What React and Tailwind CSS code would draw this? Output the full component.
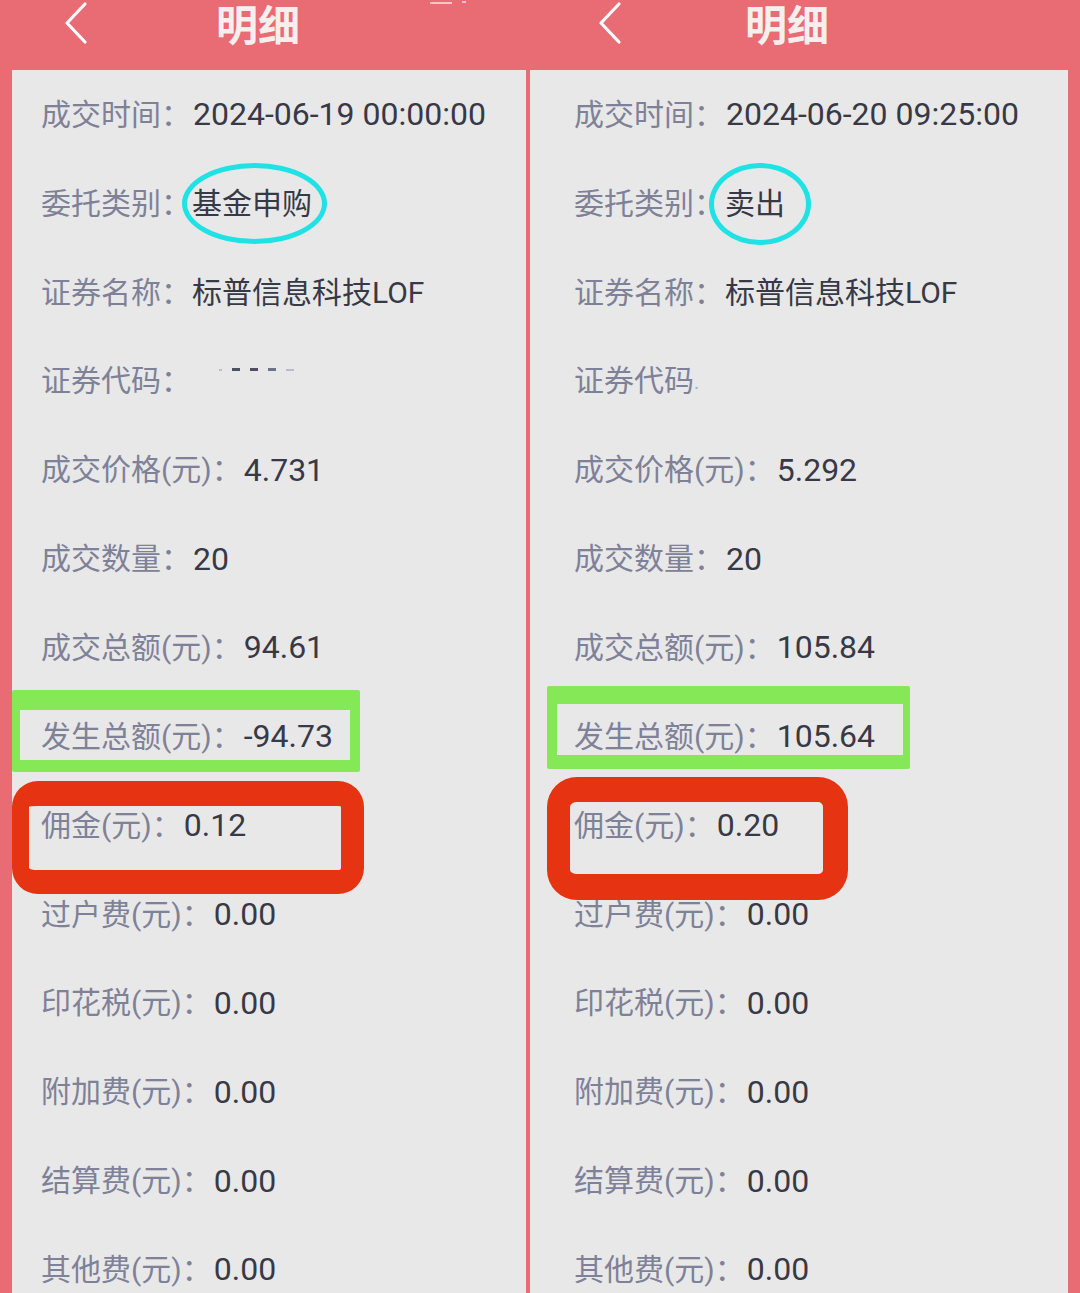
import React from "react";

const leftRows = [
  ["成交时间", "2024-06-19 00:00:00"],
  ["委托类别", "基金申购"],
  ["证券名称", "标普信息科技LOF"],
  ["证券代码", "__mask__"],
  ["成交价格(元)", "4.731"],
  ["成交数量", "20"],
  ["成交总额(元)", "94.61"],
  ["发生总额(元)", "-94.73"],
  ["佣金(元)", "0.12"],
  ["过户费(元)", "0.00"],
  ["印花税(元)", "0.00"],
  ["附加费(元)", "0.00"],
  ["结算费(元)", "0.00"],
  ["其他费(元)", "0.00"],
];

const rightRows = [
  ["成交时间", "2024-06-20 09:25:00"],
  ["委托类别", "卖出"],
  ["证券名称", "标普信息科技LOF"],
  ["证券代码", "__dot__"],
  ["成交价格(元)", "5.292"],
  ["成交数量", "20"],
  ["成交总额(元)", "105.84"],
  ["发生总额(元)", "105.64"],
  ["佣金(元)", "0.20"],
  ["过户费(元)", "0.00"],
  ["印花税(元)", "0.00"],
  ["附加费(元)", "0.00"],
  ["结算费(元)", "0.00"],
  ["其他费(元)", "0.00"],
];

function Mask() {
  return (
    <span className="flex items-center gap-[10px] ml-[28px] -translate-y-[11px]">
      <span className="w-[3px] h-[2px] bg-[#b9bccb]" />
      <span className="w-[8px] h-[3px] bg-[#4d4f62]" />
      <span className="w-[8px] h-[3px] bg-[#4d4f62]" />
      <span className="w-[8px] h-[3px] bg-[#6f7286]" />
      <span className="w-[8px] h-[2px] bg-[#b9bccb]" />
    </span>
  );
}

function Row({ label, value }) {
  if (value === "__dot__") {
    return (
      <div className="flex items-center h-[88.85px] shrink-0 whitespace-nowrap">
        <span className="text-[30px] text-[#7e8197]">{label}</span>
        <span className="text-[20px] text-[#b0b3c2] self-end mb-[28px]">.</span>
      </div>
    );
  }
  const cjk = /[\u4e00-\u9fff]/.test(value);
  return (
    <div className="flex items-center h-[88.85px] shrink-0 whitespace-nowrap">
      <span className="text-[30px] text-[#7e8197]">{label}：</span>
      {value === "__mask__" ? (
        <Mask />
      ) : cjk ? (
        <span className="text-[30px] text-[#383946] ml-[1px]">{value}</span>
      ) : (
        <span className="text-[32px] text-[#383946] ml-[2px]">{value}</span>
      )}
    </div>
  );
}

function Chevron() {
  return (
    <svg width="24" height="44" viewBox="0 0 24 44" className="mt-[1px] shrink-0">
      <polyline points="21,3 3,22 21,41" fill="none" stroke="#ffffff" strokeWidth="3.2" strokeLinecap="round" strokeLinejoin="round" />
    </svg>
  );
}

export default function App() {
  return (
    <div className="w-[1080px] h-[1293px] overflow-hidden bg-[#e96b74] flex font-[Roboto,'Noto_Sans_CJK_SC',sans-serif]">
      {/* Left column */}
      <div className="w-[526px] h-[1293px] flex flex-col shrink-0">
        <div className="h-[70px] shrink-0 relative flex items-start pl-[64px]">
          <Chevron />
          <span className="ml-[128px] mt-[2px] text-[42px] leading-[42px] font-bold text-[#f7eeee] font-['Noto_Sans_CJK_SC',sans-serif]">明细</span>
          <span className="absolute left-[430px] top-[2px] w-[22px] h-[2px] bg-white opacity-60" />
          <span className="absolute left-[462px] top-[1px] w-[4px] h-[2px] bg-white opacity-60" />
        </div>
        <div className="ml-[12px] flex-1 min-h-0 overflow-hidden bg-[#e8e8e8] relative pl-[29px] flex flex-col">
          {leftRows.map(([l, v]) => (
            <Row key={l} label={l} value={v} />
          ))}
          {/* annotations */}
          <div className="absolute left-[170px] top-[93px] w-[145px] h-[81px] rounded-[50%] border-[5px] border-[#1fe2e4]" />
          <div className="absolute left-0 top-[620px] w-[348px] h-[82px] border-t-[20px] border-b-[12px] border-l-[8px] border-r-[10px] border-[#84e857] rounded-[2px]" />
          <div className="absolute left-0 top-[711px] w-[352px] h-[113px] border-t-[25px] border-b-[24px] border-l-[17px] border-r-[23px] border-[#e63412] rounded-[26px]" />
        </div>
      </div>
      {/* divider */}
      <div className="w-[4px] shrink-0" />
      {/* Right column */}
      <div className="w-[550px] h-[1293px] flex flex-col shrink-0">
        <div className="h-[70px] shrink-0 flex items-start pl-[68px]">
          <Chevron />
          <span className="ml-[123px] mt-[2px] text-[42px] leading-[42px] font-bold text-[#f7eeee] font-['Noto_Sans_CJK_SC',sans-serif]">明细</span>
        </div>
        <div className="w-[538px] flex-1 min-h-0 overflow-hidden bg-[#e8e8e8] relative pl-[44px] flex flex-col">
          {rightRows.map(([l, v]) => (
            <Row key={l} label={l} value={v} />
          ))}
          <div className="absolute left-[179px] top-[93px] w-[102px] h-[82px] rounded-[50%] border-[5px] border-[#1fe2e4]" />
          <div className="absolute left-[17px] top-[616px] w-[363px] h-[83px] border-t-[18px] border-b-[14px] border-l-[10px] border-r-[7px] border-[#84e857] rounded-[2px]" />
          <div className="absolute left-[17px] top-[707px] w-[301px] h-[123px] border-t-[25px] border-b-[26px] border-l-[23px] border-r-[25px] border-[#e63412] rounded-[30px]" />
        </div>
      </div>
    </div>
  );
}
